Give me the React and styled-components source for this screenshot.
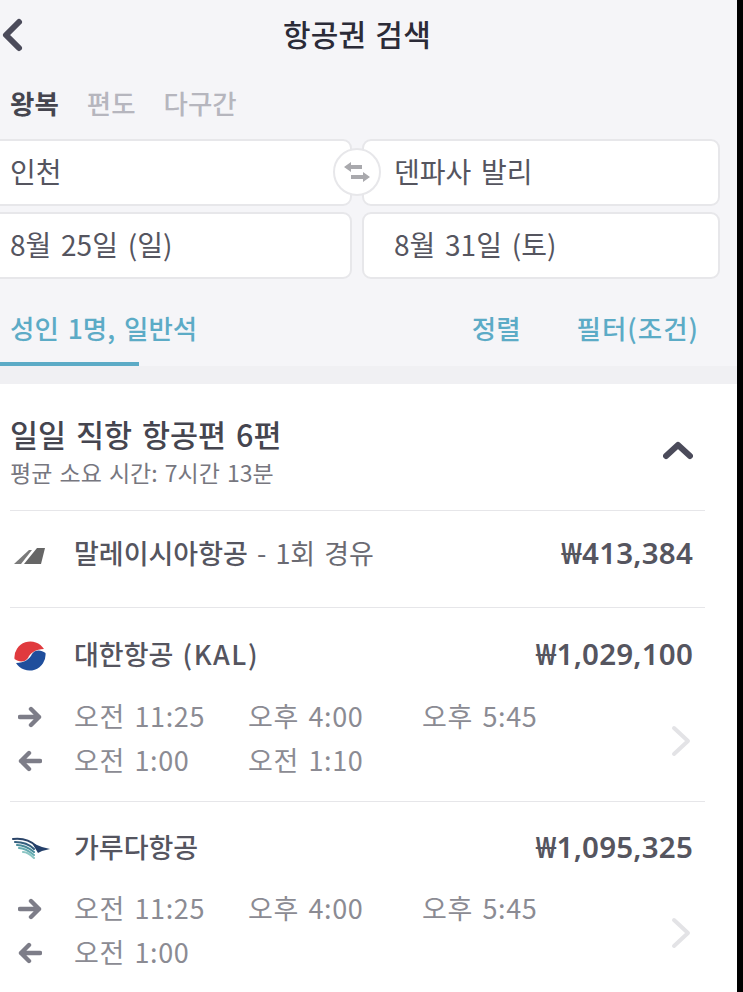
import React from "react";
import styled, { createGlobalStyle } from "styled-components";

const GlobalStyle = createGlobalStyle`
  html, body {
    margin: 0;
    padding: 0;
    background: #000;
  }
  * {
    box-sizing: border-box;
  }
`;

const Page = styled.div`
  width: 737px;
  height: 992px;
  overflow: hidden;
  background: #fff;
  font-family: "Noto Sans CJK KR", "Noto Sans", sans-serif;
  color: #55555f;
`;

const Top = styled.div`
  background: #f5f5f8;
  height: 366px;
`;

const Header = styled.header`
  height: 70px;
  display: flex;
  align-items: center;
  justify-content: center;
  padding: 0 23px 4px 0;
  position: relative;
`;

const BackIcon = styled.svg`
  position: absolute;
  left: 0;
  top: 15px;
`;

const Title = styled.h1`
  margin: 0;
  font-size: 30px;
  font-weight: 500;
  color: #2b2b38;
  letter-spacing: 0.2px;
  word-spacing: 2px;
`;

const Tabs = styled.div`
  height: 69px;
  display: flex;
  align-items: center;
  gap: 28px;
  padding: 0 0 4px 10px;
`;

const Tab = styled.span`
  font-size: 26.5px;
  font-weight: ${(p) => (p.$active ? 700 : 500)};
  color: ${(p) => (p.$active ? "#45454f" : "#b6b6be")};
`;

const Fields = styled.div`
  position: relative;
  display: grid;
  grid-template-columns: 362px 358px;
  grid-auto-rows: 67px;
  row-gap: 6px;
  column-gap: 10px;
  margin-left: -10px;
`;

const Field = styled.div`
  background: #fff;
  border: 2px solid #e7e7ea;
  border-radius: 9px;
  display: flex;
  align-items: center;
  padding: 0 0 3px ${(p) => (p.$right ? "30px" : "18px")};
  font-size: 28px;
  word-spacing: 3.5px;
  color: #55555f;
`;

const Swap = styled.div`
  position: absolute;
  left: 343px;
  top: 9px;
  width: 48px;
  height: 48px;
  border-radius: 50%;
  background: #fff;
  border: 2px solid #e7e7ea;
  display: flex;
  align-items: center;
  justify-content: center;
`;

const Options = styled.div`
  height: 87px;
  display: flex;
  align-items: center;
  justify-content: space-between;
  padding: 10px 38px 0 10px;
  position: relative;
`;

const OptionText = styled.span`
  font-size: 26.5px;
  font-weight: 500;
  color: #5cabc6;
  word-spacing: 3px;
  letter-spacing: ${(p) => (p.$wide ? "1px" : "0")};
`;

const OptionRight = styled.div`
  display: flex;
  gap: 56px;
`;

const Underline = styled.div`
  position: absolute;
  left: 0;
  bottom: 0;
  width: 139px;
  height: 4px;
  background: #5cabc6;
`;

const Band = styled.div`
  height: 18px;
  background: #f0f0f3;
`;

const Content = styled.div`
  padding: 0 32px 0 10px;
`;

const Summary = styled.div`
  height: 127px;
  padding-top: 6px;
  border-bottom: 1px solid #e6e6e9;
  display: flex;
  align-items: center;
  justify-content: space-between;
`;

const SummaryTitle = styled.div`
  font-size: 30.5px;
  font-weight: 500;
  color: #45454f;
  line-height: 40px;
  word-spacing: 3px;
`;

const SummarySub = styled.div`
  font-size: 23px;
  color: #77777f;
  line-height: 30px;
  margin-top: 3px;
  word-spacing: 2px;
`;

const Collapse = styled.svg`
  margin: 0 12px 0 0;
`;

const Airline = styled.section`
  border-bottom: ${(p) => (p.$last ? "none" : "1px solid #e6e6e9")};
  padding-bottom: ${(p) => (p.$last ? "0" : p.$gap || "0")};
`;

const AirlineHead = styled.div`
  display: flex;
  align-items: center;
  height: ${(p) => p.$height}px;
  padding: ${(p) => p.$top || 0}px 12px ${(p) => p.$bottom || 0}px 0;
`;

const LogoSlot = styled.div`
  width: 64px;
  display: flex;
  align-items: center;
  padding: ${(p) => p.$drop || 0}px 0 0 ${(p) => p.$left || 3}px;
`;

const Name = styled.div`
  flex: 1;
  font-size: 27px;
  font-weight: 500;
  color: #55555f;
  word-spacing: 3px;
`;

const Code = styled.span`
  letter-spacing: 1.6px;
`;

const Stop = styled.span`
  font-weight: 400;
  color: #6a6a72;
`;

const Price = styled.div`
  font-family: "Noto Sans", "Noto Sans CJK KR", sans-serif;
  font-size: 29.5px;
  font-weight: 600;
  letter-spacing: 0.2px;
  color: #55555f;
`;

const Schedule = styled.div`
  position: relative;
`;

const TimeRow = styled.div`
  display: flex;
  align-items: center;
  height: 44.5px;
`;

const ArrowSlot = styled.div`
  width: 64px;
  padding: 3px 0 0 8px;
  display: flex;
`;

const TimeCell = styled.span`
  width: 174px;
  font-size: 27px;
  color: #8b8b93;
  word-spacing: 3px;
  letter-spacing: 0.6px;
`;

const Chevron = styled.svg`
  position: absolute;
  right: 14px;
  top: 32px;
`;

const KoreanAirLogo = () => (
  <svg width="34" height="34" viewBox="0 0 34 34">
    <path d="M31 10A16 16 0 0 0 1.5 20C6 23.5 12 23.5 15 19C17 14 23 10 31 10Z" fill="#e03a3e" />
    <path d="M3 24A16 16 0 0 0 32.5 14C28 10.5 22 10.5 19 15C17 20 11 24 3 24Z" fill="#1f4e9c" />
  </svg>
);

const MalaysiaLogo = () => (
  <svg width="32" height="18" viewBox="0 0 32 18">
    <path d="M1 17 16 3h3L8 17z" fill="#7a7a7a" />
    <path d="M11 17 24 1h8l-4 16z" fill="#666" />
  </svg>
);

const GarudaLogo = () => (
  <svg width="40" height="24" viewBox="0 0 40 24">
    <g fill="none" strokeWidth="2.1" strokeLinecap="round">
      <path d="M1 2C10 1 18 3 24 9" stroke="#2a4468" />
      <path d="M3 5C10 5 17 7 22 12" stroke="#34607f" />
      <path d="M5 8C11 8 17 11 22 15" stroke="#478a99" />
      <path d="M7 11C12 11 17 14 22 18" stroke="#64abb0" />
      <path d="M11 15C14 15 18 17 22 21" stroke="#8cc6c4" />
    </g>
    <path d="M20 6 30 10 38 12 30 14 26 16z" fill="#24406a" />
  </svg>
);

const ArrowIcon = ({ back }) => (
  <svg width="24" height="22" viewBox="0 0 24 22">
    <path
      d={back ? "M22 11H3M11 3l-8 8 8 8" : "M2 11h19M13 3l8 8-8 8"}
      fill="none"
      stroke="#7d7d88"
      strokeWidth="4.4"
      strokeLinecap="round"
      strokeLinejoin="round"
    />
  </svg>
);

const SwapIcon = () => (
  <svg width="28" height="22" viewBox="0 0 28 22">
    <path d="M8 1 1 6l7 5V8h11V4H8z" fill="#a9a9ad" />
    <path d="M20 11l7 5-7 5v-3H8v-4h12z" fill="#a9a9ad" />
  </svg>
);

const flights = [
  {
    name: "대한항공",
    code: "(KAL)",
    price: "₩1,029,100",
    logo: <KoreanAirLogo />,
    head: { height: 85, top: 6, drop: 5 },
    outbound: ["오전 11:25", "오후 4:00", "오후 5:45"],
    inbound: ["오전 1:00", "오전 1:10"],
  },
  {
    name: "가루다항공",
    price: "₩1,095,325",
    logo: <GarudaLogo />,
    head: { height: 83, top: 5, drop: 6, left: 2 },
    outbound: ["오전 11:25", "오후 4:00", "오후 5:45"],
    inbound: ["오전 1:00"],
    last: true,
  },
];

const TimeLine = ({ back, times }) => (
  <TimeRow>
    <ArrowSlot>
      <ArrowIcon back={back} />
    </ArrowSlot>
    {times.map((t, i) => (
      <TimeCell key={i}>{t}</TimeCell>
    ))}
  </TimeRow>
);

const App = () => (
  <Page>
    <GlobalStyle />
    <Top>
      <Header>
        <BackIcon width="24" height="40" viewBox="0 0 24 40">
          <path d="M19 7 6 20l13 13" fill="none" stroke="#4b4b5a" strokeWidth="6" strokeLinecap="round" strokeLinejoin="round" />
        </BackIcon>
        <Title>항공권 검색</Title>
      </Header>
      <Tabs>
        <Tab $active>왕복</Tab>
        <Tab>편도</Tab>
        <Tab>다구간</Tab>
      </Tabs>
      <Fields>
        <Field>인천</Field>
        <Field $right>덴파사 발리</Field>
        <Field>8월 25일 (일)</Field>
        <Field $right>8월 31일 (토)</Field>
        <Swap>
          <SwapIcon />
        </Swap>
      </Fields>
      <Options>
        <OptionText>성인 1명, 일반석</OptionText>
        <OptionRight>
          <OptionText>정렬</OptionText>
          <OptionText $wide>필터(조건)</OptionText>
        </OptionRight>
        <Underline />
      </Options>
    </Top>
    <Band />
    <Content>
      <Summary>
        <div>
          <SummaryTitle>일일 직항 항공편 6편</SummaryTitle>
          <SummarySub>평균 소요 시간: 7시간 13분</SummarySub>
        </div>
        <Collapse width="30" height="20" viewBox="0 0 30 20">
          <path d="M3 16 15 5l12 11" fill="none" stroke="#4b4b5a" strokeWidth="6" strokeLinecap="round" strokeLinejoin="round" />
        </Collapse>
      </Summary>
      <Airline>
        <AirlineHead $height={96} $bottom={14}>
          <LogoSlot $drop={7}>
            <MalaysiaLogo />
          </LogoSlot>
          <Name>
            말레이시아항공 <Stop>- 1회 경유</Stop>
          </Name>
          <Price>₩413,384</Price>
        </AirlineHead>
      </Airline>
      {flights.map((f) => (
        <Airline key={f.name} $last={f.last} $gap="19px">
          <AirlineHead $height={f.head.height} $top={f.head.top}>
            <LogoSlot $drop={f.head.drop} $left={f.head.left}>
              {f.logo}
            </LogoSlot>
            <Name>
              {f.name} {f.code && <Code>{f.code}</Code>}
            </Name>
            <Price>{f.price}</Price>
          </AirlineHead>
          <Schedule>
            <TimeLine times={f.outbound} />
            <TimeLine back times={f.inbound} />
            <Chevron width="20" height="32" viewBox="0 0 20 32">
              <path d="M3 3l14 13L3 29" fill="none" stroke="#e3e3e6" strokeWidth="4" strokeLinecap="round" strokeLinejoin="round" />
            </Chevron>
          </Schedule>
        </Airline>
      ))}
    </Content>
  </Page>
);

export default App;
